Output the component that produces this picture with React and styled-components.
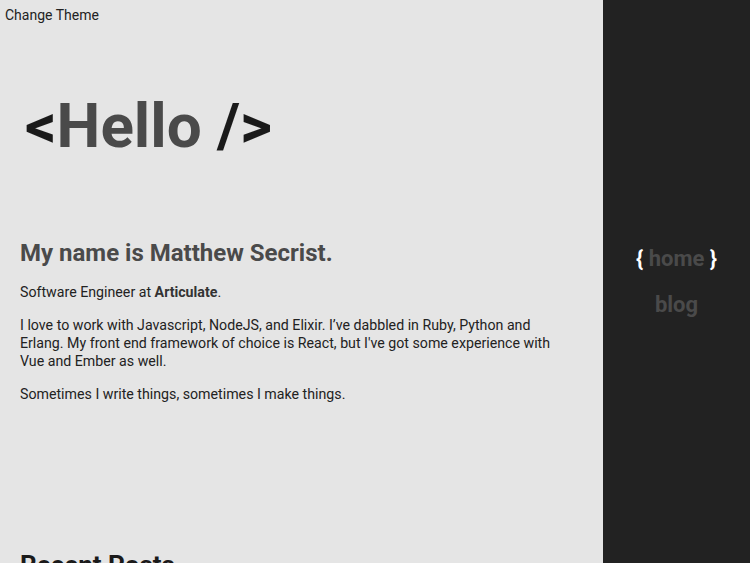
import React from "react";
import styled, { createGlobalStyle } from "styled-components";

const Global = createGlobalStyle`
  html, body { margin: 0; padding: 0; }
  body {
    background: #e5e5e5;
    font-family: Roboto, "Noto Sans", sans-serif;
    color: #222;
  }
`;

const Layout = styled.div`
  display: flex;
  min-height: 100vh;
`;

const Main = styled.main`
  flex: 1;
  display: flex;
  flex-direction: column;
`;

const ThemeButton = styled.button`
  align-self: flex-start;
  background: none;
  border: none;
  padding: 7px 5px 6px;
  font-family: inherit;
  font-size: 14px;
  color: #222;
  cursor: pointer;
`;

const Content = styled.div`
  padding: 0 40px 0 20px;
`;

const Hero = styled.h1`
  margin: 61px 0 0 5px;
  font-size: 62px;
  line-height: 72px;
  font-weight: 700;
  color: #4a4a4a;
`;

const Tag = styled.span`
  color: #1a1a1a;
`;

const Intro = styled.section`
  margin-top: 76px;
`;

const Heading = styled.h2`
  margin: 0 0 15px;
  font-size: 24px;
  line-height: 30px;
  font-weight: 700;
  color: #4a4a4a;
`;

const Para = styled.p`
  margin: 0 0 15px;
  font-size: 14.2px;
  line-height: 18px;
  color: #222;
  max-width: 545px;
  strong { font-weight: 700; color: #333; }
`;

const Posts = styled.section`
  margin-top: 147px;
`;

const PostsHeading = styled.h2`
  margin: 0;
  font-size: 26px;
  line-height: 30px;
  font-weight: 700;
  color: #1a1a1a;
`;

const Sidebar = styled.aside`
  width: 147px;
  flex-shrink: 0;
  background: #222;
  height: 100vh;
  position: sticky;
  top: 0;
  display: flex;
  flex-direction: column;
  align-items: center;
  justify-content: center;
  gap: 18px;
`;

const NavItem = styled.a`
  font-size: 22px;
  line-height: 28px;
  font-weight: 700;
  color: #4a4a4a;
  text-decoration: none;
`;

const Brace = styled.span`
  color: #fff;
`;

export default function App() {
  return (
    <>
      <Global />
      <Layout>
        <Main>
          <ThemeButton>Change Theme</ThemeButton>
          <Content>
            <Hero>
              <Tag>&lt;</Tag>Hello <Tag>/&gt;</Tag>
            </Hero>
            <Intro>
              <Heading>My name is Matthew Secrist.</Heading>
              <Para>
                Software Engineer at <strong>Articulate</strong>.
              </Para>
              <Para>
                I love to work with Javascript, NodeJS, and Elixir. I’ve dabbled in Ruby, Python and
                Erlang. My front end framework of choice is React, but I've got some experience with
                Vue and Ember as well.
              </Para>
              <Para>Sometimes I write things, sometimes I make things.</Para>
            </Intro>
            <Posts>
              <PostsHeading>Recent Posts</PostsHeading>
            </Posts>
          </Content>
        </Main>
        <Sidebar>
          <NavItem href="#">
            <Brace>{"{"}</Brace> home <Brace>{"}"}</Brace>
          </NavItem>
          <NavItem href="#">blog</NavItem>
        </Sidebar>
      </Layout>
    </>
  );
}
